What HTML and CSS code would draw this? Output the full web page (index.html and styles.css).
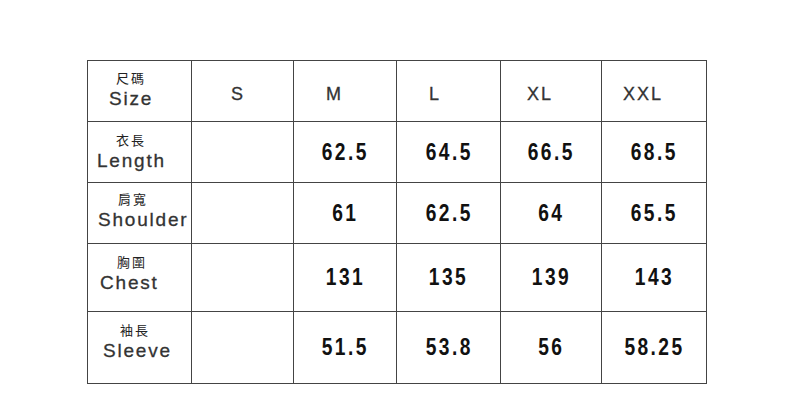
FILE: index.html
```html
<!DOCTYPE html>
<html>
<head>
<meta charset="utf-8">
<link rel="stylesheet" href="styles.css">
</head>
<body>
<div class="chart">
  <div class="cell label l-size"><span class="zh">尺碼</span><span class="en">Size</span></div>
  <div class="cell head h-s">S</div>
  <div class="cell head h-m">M</div>
  <div class="cell head h-l">L</div>
  <div class="cell head h-xl">XL</div>
  <div class="cell head h-xxl">XXL</div>

  <div class="cell label l-length"><span class="zh">衣長</span><span class="en">Length</span></div>
  <div class="cell"></div>
  <div class="cell num"><span>62.5</span></div>
  <div class="cell num"><span>64.5</span></div>
  <div class="cell num"><span>66.5</span></div>
  <div class="cell num"><span>68.5</span></div>

  <div class="cell label l-shoulder"><span class="zh">肩寬</span><span class="en">Shoulder</span></div>
  <div class="cell"></div>
  <div class="cell num"><span>61</span></div>
  <div class="cell num"><span>62.5</span></div>
  <div class="cell num"><span>64</span></div>
  <div class="cell num"><span>65.5</span></div>

  <div class="cell label l-chest"><span class="zh">胸圍</span><span class="en">Chest</span></div>
  <div class="cell"></div>
  <div class="cell num"><span>131</span></div>
  <div class="cell num"><span>135</span></div>
  <div class="cell num"><span>139</span></div>
  <div class="cell num"><span>143</span></div>

  <div class="cell label l-sleeve"><span class="zh">袖長</span><span class="en">Sleeve</span></div>
  <div class="cell"></div>
  <div class="cell num"><span>51.5</span></div>
  <div class="cell num"><span>53.8</span></div>
  <div class="cell num"><span>56</span></div>
  <div class="cell num"><span>58.25</span></div>
</div>
</body>
</html>
```

FILE: styles.css
```css
html, body {
  margin: 0;
  padding: 0;
  background: #ffffff;
}

body {
  width: 790px;
  height: 408px;
  overflow: hidden;
  font-family: "Liberation Sans", Arial, sans-serif;
}

.chart {
  margin: 60px 0 0 87px;
  width: 620px;
  display: grid;
  grid-template-columns: 103px 101px 102px 103px 100px 104px;
  grid-template-rows: 60px 60px 60px 67px 71px;
  gap: 1px;
  padding: 1px;
  box-sizing: border-box;
  background: #444;
}

.cell {
  background: #ffffff;
  display: flex;
  align-items: center;
  justify-content: center;
}

.label {
  flex-direction: column;
  align-items: flex-start;
  justify-content: flex-start;
  color: #333;
}

.zh {
  font-family: "Noto Sans CJK TC", "Noto Sans CJK SC", sans-serif;
  font-size: 13px;
  line-height: 14px;
  letter-spacing: 2px;
  color: #222;
}

.en {
  font-size: 19px;
  line-height: 22px;
  letter-spacing: 1.8px;
  margin-top: 3px;
  -webkit-text-stroke: 0.3px #333;
}

.l-size { padding: 10px 0 0 21px; }
.l-size .zh { margin-left: 7px; }
.l-length { padding: 11px 0 0 9px; }
.l-length .zh { margin-left: 19px; }
.l-shoulder { padding: 9px 0 0 10px; }
.l-shoulder .zh { margin-left: 20px; }
.l-chest { padding: 11px 0 0 12px; }
.l-chest .zh { margin-left: 17px; }
.l-sleeve { padding: 11px 0 0 15px; }
.l-sleeve .zh { margin-left: 17px; }

.head {
  justify-content: flex-start;
  font-size: 18px;
  letter-spacing: 2px;
  color: #333;
  padding-top: 6px;
  box-sizing: border-box;
  -webkit-text-stroke: 0.3px #333;
}

.h-s { padding-left: 39px; }
.h-m { padding-left: 32px; }
.h-l { padding-left: 32px; }
.h-xl { padding-left: 26px; }
.h-xxl { padding-left: 21px; }

.num {
  font-family: "Liberation Sans", Arial, sans-serif;
  font-weight: bold;
  font-size: 24px;
  color: #111;
  padding-bottom: 1px;
  box-sizing: border-box;
}

.num span {
  display: inline-block;
  letter-spacing: 3px;
  padding-left: 1px;
  transform: scaleX(0.8);
}
```
